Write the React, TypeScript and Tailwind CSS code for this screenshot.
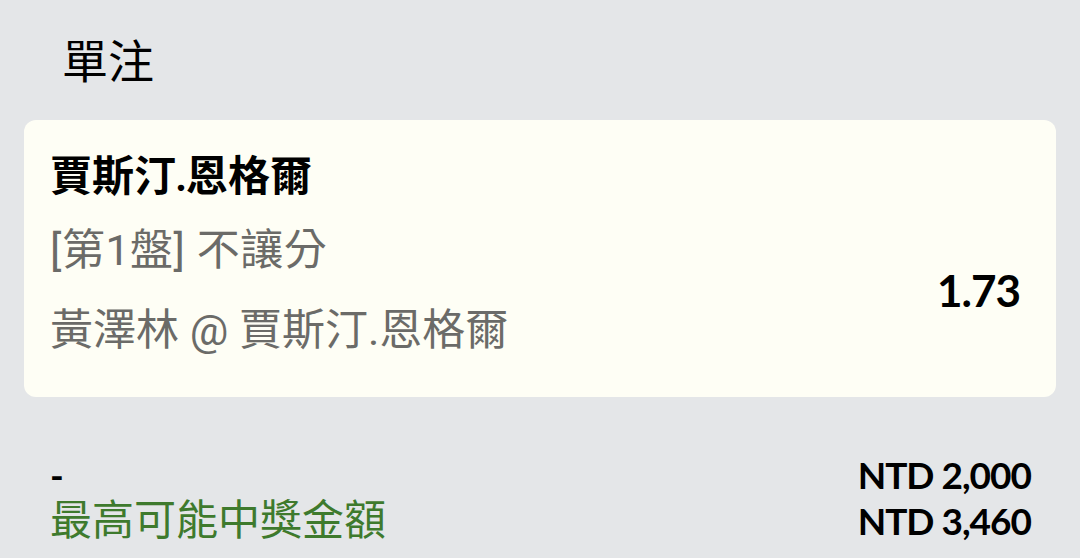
export default function App() {
  const ff = { fontFamily: 'Lato, "Noto Sans CJK TC", sans-serif' };
  const rf = { fontFamily: 'Roboto, "Noto Sans CJK TC", sans-serif' };
  return (
    <div className="w-[1080px] h-[558px] overflow-hidden bg-[#e4e6e8] px-6" style={ff}>
      <div className="pt-[33px] pl-[38px] text-[46px] leading-[56px] text-black">單注</div>
      <div className="mt-[31px] h-[277px] rounded-[12px] bg-[#fefef5] pl-[26px] pr-[36px] pt-[29px]">
        <div className="text-[42px] leading-[52px] font-bold text-black">賈斯汀.恩格爾</div>
        <div className="mt-[23px] flex items-center justify-between">
          <div className="text-[43px] text-[#6b6b68]" style={rf}>
            <div className="leading-[52px] tracking-[0.5px]">[第1盤] 不讓分</div>
            <div className="mt-[28px] leading-[52px]">黃澤林 @ 賈斯汀.恩格爾</div>
          </div>
          <div className="text-[44px] font-bold leading-[52px] tracking-[-1px] text-black">1.73</div>
        </div>
      </div>
      <div className="mt-[55px] pl-[26px] pr-[25px] text-[37px] leading-[46px]">
        <div className="flex justify-between">
          <span className="font-bold text-black">-</span>
          <span className="font-bold tracking-[-1px] text-black">NTD 2,000</span>
        </div>
        <div className="flex justify-between">
          <span className="text-[42px] text-[#3e7a2d]" style={rf}>最高可能中獎金額</span>
          <span className="font-bold tracking-[-1px] text-black">NTD 3,460</span>
        </div>
      </div>
    </div>
  );
}
